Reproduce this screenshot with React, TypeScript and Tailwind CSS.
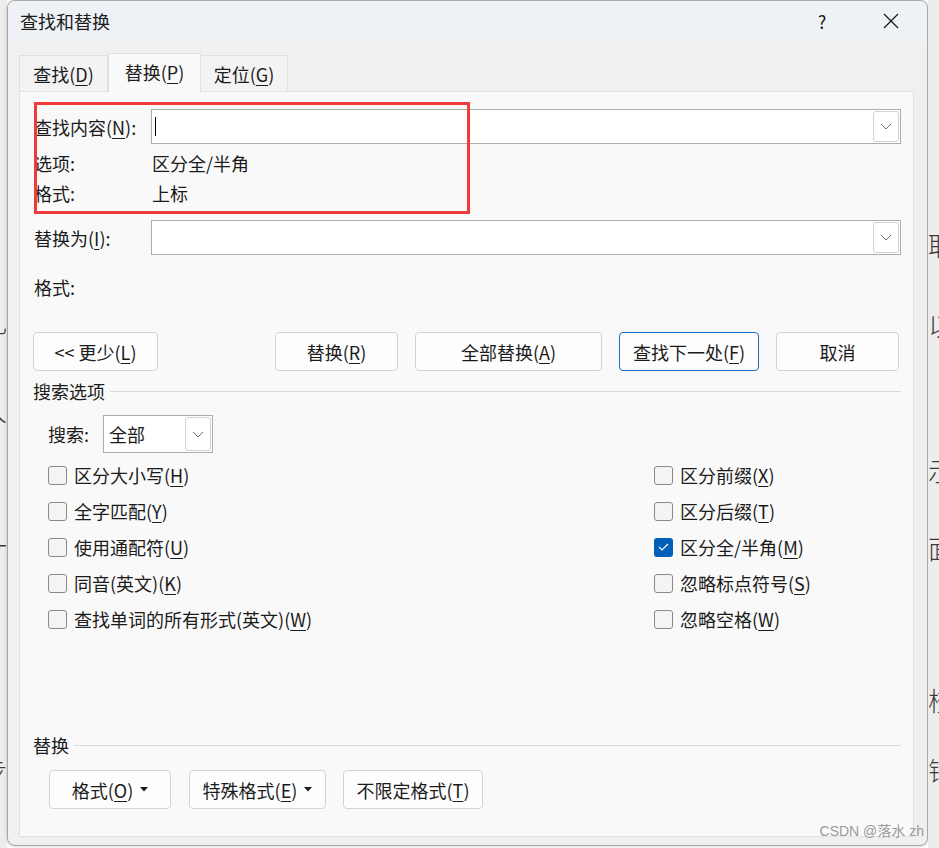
import React from 'react';

const font = "font-['Noto_Sans_CJK_SC','Noto_Sans',sans-serif]";

function U({ c }: { c: string }) {
  return <span className="underline underline-offset-[3px] decoration-1">{c}</span>;
}

function Chevron() {
  return (
    <svg width="12" height="7" viewBox="0 0 12 7" fill="none">
      <polyline points="1,1 6,6 11,1" stroke="#6b6b6b" strokeWidth="1" />
    </svg>
  );
}

function Caret() {
  return (
    <svg width="8" height="5" viewBox="0 0 8 5" className="ml-[7px]">
      <polygon points="0,0 8,0 4,4.5" fill="#1b1b1b" />
    </svg>
  );
}

function Combo({ caret }: { caret?: boolean }) {
  return (
    <div className="flex-1 h-[35px] border border-[#adadad] bg-white flex items-center justify-between pl-[3px] pr-px">
      {caret ? <div className="w-px h-[19px] bg-black" /> : <div />}
      <div className="w-[26px] h-[31px] border border-[#d2d2d2] rounded-[3px] flex items-center justify-center">
        <Chevron />
      </div>
    </div>
  );
}

function Btn({
  w,
  children,
  focus,
  className = '',
}: {
  w: string;
  children: React.ReactNode;
  focus?: boolean;
  className?: string;
}) {
  return (
    <div
      className={`${w} h-[39px] rounded-[4px] bg-[#fdfdfd] flex items-center justify-center border ${
        focus ? 'border-[#1a6cc0]' : 'border-[#d3d3d3]'
      } ${className}`}
    >
      {children}
    </div>
  );
}

function Check({ label, checked }: { label: React.ReactNode; checked?: boolean }) {
  return (
    <div className="h-[36px] flex items-center gap-[7px]">
      {checked ? (
        <div className="w-[19px] h-[19px] rounded-[3px] bg-[#005fb8] flex items-center justify-center">
          <svg width="11" height="8" viewBox="0 0 11 8" fill="none">
            <polyline points="1,4 4,7 10,1" stroke="white" strokeWidth="1.1" />
          </svg>
        </div>
      ) : (
        <div className="w-[19px] h-[19px] rounded-[3px] border border-[#8a8a8a] bg-[#f4f4f4]" />
      )}
      <span>{label}</span>
    </div>
  );
}

function Section({ title }: { title: string }) {
  return (
    <div className="flex items-center h-[22px] -ml-px">
      <span>{title}</span>
      <div className="flex-1 h-px bg-[#dadada] ml-[5px]" />
    </div>
  );
}

export default function App() {
  return (
    <div className={`relative w-[939px] h-[848px] bg-white flex overflow-hidden text-[18px] leading-[22px] text-[#1b1b1b] ${font}`}>
      {/* document text behind the dialog, left edge */}
      <div className="w-[7px] h-[848px] overflow-hidden flex flex-col items-end bg-[#ededed] text-[26px] leading-[26px] text-[#3a3a3a] font-light">
        <div className="mt-[309px] whitespace-nowrap">礼</div>
        <div className="mt-[62px] whitespace-nowrap">人</div>
        <div className="mt-[109px] whitespace-nowrap">一</div>
        <div className="mt-[27px] whitespace-nowrap">）</div>
        <div className="mt-[146px] whitespace-nowrap">步</div>
      </div>

      {/* dialog */}
      <div className="w-[921px] h-[846px] border border-[#a8a8a8] rounded-[8px] overflow-hidden flex flex-col bg-[#f0f0f0] shadow-[0_0_3px_rgba(0,0,0,0.25)]">
        <div className="h-[40px] bg-[#eef2f7] flex items-center pl-[12px] pr-[28px]">
          <span className="flex-1">查找和替换</span>
          <span className="w-[12px] text-center mr-[55px]">?</span>
          <svg width="16" height="16" viewBox="0 0 16 16">
            <line x1="1" y1="1" x2="15" y2="15" stroke="#1b1b1b" strokeWidth="1.2" />
            <line x1="15" y1="1" x2="1" y2="15" stroke="#1b1b1b" strokeWidth="1.2" />
          </svg>
        </div>

        <div className="flex-1 flex flex-col pt-[12px] pl-[11px] pr-[13px]">
          {/* tabs */}
          <div className="flex items-end h-[38px]">
            <div className="w-[89px] h-[36px] border border-b-0 border-[#e0e0e0] bg-[#f3f3f3] flex items-center justify-center">
              查找(<U c="D" />)
            </div>
            <div className="w-[93px] h-[39px] -mb-px z-10 border border-b-0 border-[#e0e0e0] bg-[#f9f9f9] flex items-center justify-center pb-[2px]">
              替换(<U c="P" />)
            </div>
            <div className="w-[87px] h-[36px] border border-b-0 border-l-0 border-[#e0e0e0] bg-[#f3f3f3] flex items-center justify-center">
              定位(<U c="G" />)
            </div>
          </div>

          {/* panel */}
          <div className="relative h-[746px] border border-[#e2e2e2] bg-[#f9f9f9] flex flex-col pl-[14px] pr-[12px] pt-[17px]">
            <div className="absolute left-[14px] top-[10px] w-[436px] h-[112px] border-[3px] border-[#ef3b3b]" />

            <div className="flex items-center h-[35px]">
              <div className="w-[117px]">
                查找内容(<U c="N" />):
              </div>
              <Combo caret />
            </div>
            <div className="flex items-center h-[30px] mt-[4px]">
              <div className="w-[118px]">选项:</div>
              <div>区分全/半角</div>
            </div>
            <div className="flex items-center h-[30px]">
              <div className="w-[118px]">格式:</div>
              <div>上标</div>
            </div>

            <div className="flex items-center h-[35px] mt-[12px]">
              <div className="w-[117px]">
                替换为(<U c="I" />):
              </div>
              <Combo />
            </div>
            <div className="flex items-center h-[30px] mt-[17px]">格式:</div>

            <div className="flex items-center mt-[30px] -ml-px">
              <Btn w="w-[125px]">
                &lt;&lt; 更少(<U c="L" />)
              </Btn>
              <Btn w="w-[123px]" className="ml-[117px]">
                替换(<U c="R" />)
              </Btn>
              <Btn w="w-[187px]" className="ml-[17px]">
                全部替换(<U c="A" />)
              </Btn>
              <Btn w="w-[140px]" focus className="ml-[17px]">
                查找下一处(<U c="F" />)
              </Btn>
              <Btn w="w-[123px]" className="ml-[17px]">
                取消
              </Btn>
            </div>

            <div className="mt-[9px]">
              <Section title="搜索选项" />
            </div>

            <div className="flex items-center mt-[13px] pl-[14px]">
              <div className="w-[55px]">搜索:</div>
              <div className="w-[110px] h-[38px] border border-[#adadad] bg-white flex items-center justify-between pl-[5px] pr-px">
                <span>全部</span>
                <div className="w-[26px] h-[34px] border border-[#d2d2d2] rounded-[3px] flex items-center justify-center">
                  <Chevron />
                </div>
              </div>
            </div>

            <div className="flex mt-[4px] pl-[14px]">
              <div className="w-[606px] flex flex-col">
                <Check label={<>区分大小写(<U c="H" />)</>} />
                <Check label={<>全字匹配(<U c="Y" />)</>} />
                <Check label={<>使用通配符(<U c="U" />)</>} />
                <Check label={<>同音(英文)(<U c="K" />)</>} />
                <Check label={<>查找单词的所有形式(英文)(<U c="W" />)</>} />
              </div>
              <div className="flex flex-col">
                <Check label={<>区分前缀(<U c="X" />)</>} />
                <Check label={<>区分后缀(<U c="T" />)</>} />
                <Check checked label={<>区分全/半角(<U c="M" />)</>} />
                <Check label={<>忽略标点符号(<U c="S" />)</>} />
                <Check label={<>忽略空格(<U c="W" />)</>} />
              </div>
            </div>

            <div className="mt-[97px]">
              <Section title="替换" />
            </div>

            <div className="flex items-center mt-[14px] pl-[15px]">
              <Btn w="w-[122px]">
                格式(<U c="O" />)
                <Caret />
              </Btn>
              <Btn w="w-[137px]" className="ml-[18px]">
                特殊格式(<U c="E" />)
                <Caret />
              </Btn>
              <Btn w="w-[140px]" className="ml-[17px]">
                不限定格式(<U c="T" />)
              </Btn>
            </div>
          </div>
        </div>
      </div>

      {/* document text behind the dialog, right edge */}
      <div className="flex-1 h-[848px] overflow-hidden flex flex-col items-start bg-[#ededed] text-[26px] leading-[26px] text-[#3a3a3a] font-light">
        <div className="mt-[232px] whitespace-nowrap">取</div>
        <div className="mt-[54px] whitespace-nowrap">以</div>
        <div className="mt-[119px] whitespace-nowrap">示</div>
        <div className="mt-[52px] whitespace-nowrap">面</div>
        <div className="mt-[126px] whitespace-nowrap">校</div>
        <div className="mt-[44px] whitespace-nowrap">错</div>
      </div>

      <div className="absolute right-[15px] top-[822px] text-[14px] leading-[18px] text-[#9a9a9a] font-['Liberation_Sans','Noto_Sans_CJK_SC',sans-serif]">
        CSDN @落水 zh
      </div>
    </div>
  );
}
